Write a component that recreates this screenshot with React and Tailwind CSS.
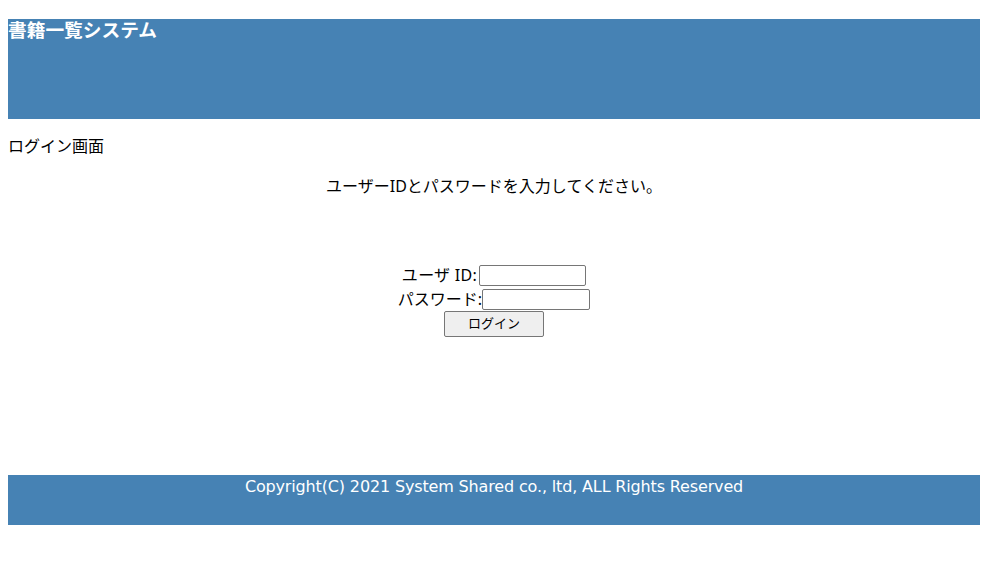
import React from 'react';

function App() {
    return (
        <div
            className="min-h-screen bg-white px-2 pt-[19px] text-black"
            style={{ fontFamily: '"Noto Sans", "Noto Sans CJK JP", sans-serif' }}
        >
            <header className="h-[100px] bg-[#4682b4]">
                <h3 className="text-[18.72px] font-bold leading-[22px] text-white">
                    書籍一覧システム
                </h3>
            </header>

            <p className="mt-[16px] text-[16px] leading-[23px]">ログイン画面</p>

            <p className="mt-[17px] text-center text-[16px] leading-[23px]">
                ユーザーIDとパスワードを入力してください。
            </p>

            <form
                className="mt-[67px] flex flex-col items-center text-[16px]"
                onSubmit={(e) => e.preventDefault()}
            >
                <div className="flex h-[21px] items-center">
                    <label className="pr-[2px] leading-[21px] tracking-[0.3px]">ユーザ ID:</label>
                    <input
                        type="text"
                        className="h-[21px] w-[107px] rounded-[2px] border border-[#767676] bg-white px-1 text-[13px]"
                    />
                </div>
                <div className="mt-[3px] flex h-[21px] items-center">
                    <label className="leading-[21px]">パスワード:</label>
                    <input
                        type="password"
                        className="h-[21px] w-[108px] rounded-[2px] border border-[#767676] bg-white px-1 text-[13px]"
                    />
                </div>
                <button
                    type="submit"
                    className="mt-[1px] h-[26px] w-[100px] rounded-[2px] border border-[#767676] bg-[#efefef] text-[13px]"
                >
                    ログイン
                </button>
            </form>

            <footer className="mt-[138px] h-[50px] bg-[#4682b4]">
                <p className="text-center font-['DejaVu_Sans',sans-serif] text-[16px] leading-[23px] tracking-[-0.15px] text-white">
                    Copyright(C) 2021 System Shared co., ltd, ALL Rights Reserved
                </p>
            </footer>
        </div>
    );
}

export default App;
